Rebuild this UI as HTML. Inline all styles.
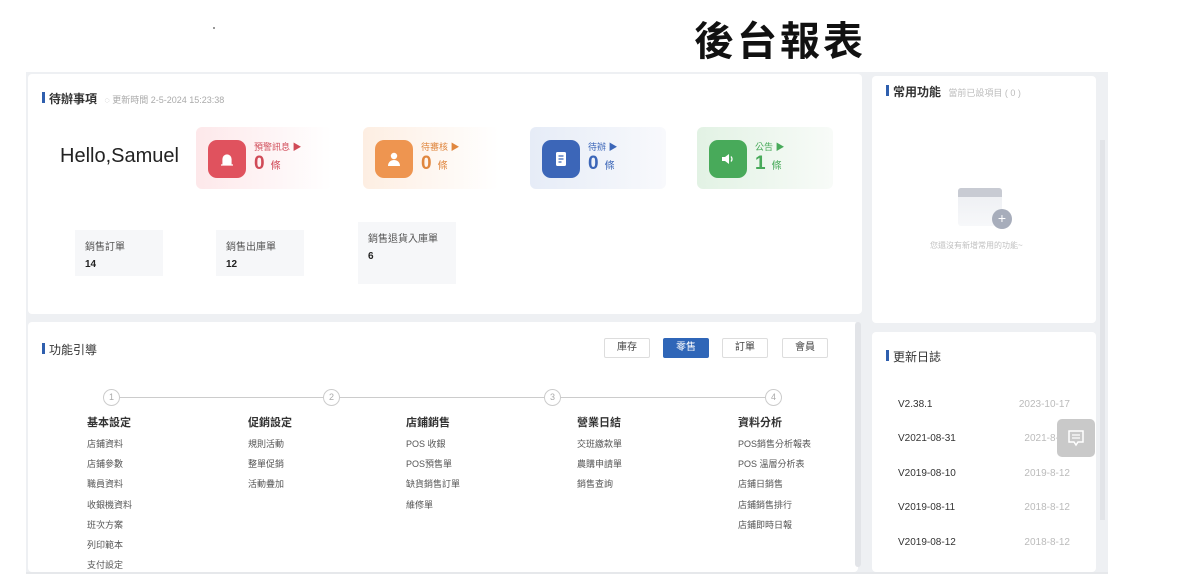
<!DOCTYPE html>
<html><head><meta charset="utf-8"><style>
*{margin:0;padding:0;box-sizing:border-box}
body{width:1200px;height:588px;background:#fff;font-family:"Liberation Sans","Noto Sans CJK TC",sans-serif;position:relative;overflow:hidden;color:#333}
.abs{position:absolute}
.bg{left:26px;top:72px;width:1082px;height:500px;background:#eef0f3}
.panel{position:absolute;background:#fff;border-radius:4px}
.h{position:absolute;font-size:12px;font-weight:bold;color:#333;padding-left:7px}
.h:before{content:"";position:absolute;left:0;top:2px;width:3px;height:11px;background:#2f5fae}
.card{position:absolute;width:136px;height:62px;border-radius:6px;top:127px}
.ic{position:absolute;left:12px;top:13px;width:38px;height:38px;border-radius:9px}
.ic svg{position:absolute;left:11px;top:11px}
.ct{position:absolute;left:58px;top:13px;font-size:9px}
.cn{position:absolute;left:58px;top:26px;font-size:19px;font-weight:bold}
.cn span{font-size:10px;font-weight:normal;margin-left:6px}
.stat{position:absolute;background:#f6f7f9;width:88px;height:46px;top:230px;font-size:10px;color:#555;padding:8px 10px}
.stat b{display:block;color:#222;margin-top:6px;font-size:10px}
.btn{position:absolute;top:338px;height:20px;border:1px solid #ddd;border-radius:2px;font-size:10px;text-align:center;line-height:18px;color:#444;width:46px;background:#fff}
.col{position:absolute;top:416px;font-size:9px;color:#555;line-height:20.2px}
.col b{font-size:11px;color:#333;display:block;line-height:14px;margin-bottom:4px}
.step{position:absolute;top:389px;width:17px;height:17px;border:1.5px solid #ccc;border-radius:50%;font-size:9px;color:#aaa;text-align:center;line-height:14px;background:#fff}
.log{position:absolute;left:898px;font-size:10px;color:#333;width:172px}
.log span{float:right;color:#bbb}
</style></head><body>
<div class="abs" style="left:213px;top:27px;width:2px;height:2px;background:#999"></div>
<div class="abs" style="left:694px;top:9px;font-size:40px;font-weight:bold;color:#111;letter-spacing:3px">後台報表</div>
<div class="abs bg"></div>
<div class="panel" style="left:28px;top:74px;width:834px;height:240px"></div>
<div class="panel" style="left:28px;top:322px;width:830px;height:250px"></div>
<div class="abs" style="left:855px;top:322px;width:6px;height:245px;background:#e2e4e8;border-radius:3px"></div>
<div class="panel" style="left:872px;top:76px;width:224px;height:247px"></div>
<div class="panel" style="left:872px;top:332px;width:224px;height:240px"></div>
<div class="abs" style="left:1100px;top:140px;width:5px;height:380px;background:#e2e4e8"></div>
<div class="abs" style="left:26px;top:572px;width:1082px;height:2px;background:#e6e8eb"></div>

<div class="h" style="left:42px;top:90px">待辦事項 <span style="font-weight:normal;font-size:9px;color:#aaa;margin-left:4px">◌ 更新時間 2-5-2024 15:23:38</span></div>
<div class="abs" style="left:60px;top:145px;font-size:20px;color:#222">Hello,Samuel</div>

<div class="card" style="left:196px;background:linear-gradient(90deg,#fde8ea,#fff)"><div class="ic" style="background:#e0525e"><svg width="16" height="16" viewBox="0 0 16 16"><path d="M4 13V8a4 4 0 0 1 8 0v5z M2 14h12" fill="#fff" stroke="#fff" stroke-width="1.2"/></svg></div><div class="ct" style="color:#d04a57">預警訊息 ▶</div><div class="cn" style="color:#d04a57">0<span>條</span></div></div>
<div class="card" style="left:363px;background:linear-gradient(90deg,#fdeee2,#fff)"><div class="ic" style="background:#ee9550"><svg width="16" height="16" viewBox="0 0 16 16"><circle cx="8" cy="5" r="3.2" fill="#fff"/><path d="M2 15c0-4 3-6 6-6s6 2 6 6z" fill="#fff"/></svg></div><div class="ct" style="color:#e0873f">待審核 ▶</div><div class="cn" style="color:#e0873f">0<span>條</span></div></div>
<div class="card" style="left:530px;background:linear-gradient(90deg,#e6ecf7,#f8f9fc)"><div class="ic" style="background:#3c66b8"><svg width="16" height="16" viewBox="0 0 16 16"><rect x="3" y="1" width="10" height="14" rx="1.5" fill="#fff"/><path d="M5.5 5h5M5.5 8h5M5.5 11h3" stroke="#3c66b8" stroke-width="1.2"/></svg></div><div class="ct" style="color:#3c66b8">待辦 ▶</div><div class="cn" style="color:#3c66b8">0<span>條</span></div></div>
<div class="card" style="left:697px;background:linear-gradient(90deg,#e2f2e4,#f8fbf8)"><div class="ic" style="background:#48aa5a"><svg width="16" height="16" viewBox="0 0 16 16"><path d="M2 6h3l4-3v10l-4-3H2z" fill="#fff"/><path d="M11 5.5q2 2.5 0 5" stroke="#fff" stroke-width="1.3" fill="none"/></svg></div><div class="ct" style="color:#48aa5a">公告 ▶</div><div class="cn" style="color:#48aa5a">1<span>條</span></div></div>

<div class="stat" style="left:75px">銷售訂單<b>14</b></div>
<div class="stat" style="left:216px">銷售出庫單<b>12</b></div>
<div class="stat" style="left:358px;top:222px;width:98px;height:62px">銷售退貨入庫單<b>6</b></div>

<div class="h" style="left:42px;top:341px;font-weight:normal">功能引導</div>
<div class="btn" style="left:604px">庫存</div>
<div class="btn" style="left:663px;background:#2f66b8;color:#fff;border-color:#2f66b8">零售</div>
<div class="btn" style="left:722px">訂單</div>
<div class="btn" style="left:782px">會員</div>
<div class="abs" style="left:112px;top:397px;width:660px;height:1px;background:#ccc"></div>
<div class="step" style="left:103px">1</div><div class="step" style="left:323px">2</div><div class="step" style="left:544px">3</div><div class="step" style="left:765px">4</div>
<div class="col" style="left:87px"><b>基本設定</b>店鋪資料<br>店鋪參數<br>職員資料<br>收銀機資料<br>班次方案<br>列印範本<br>支付設定</div>
<div class="col" style="left:248px"><b>促銷設定</b>規則活動<br>整單促銷<br>活動疊加</div>
<div class="col" style="left:406px"><b>店鋪銷售</b>POS 收銀<br>POS預售單<br>缺貨銷售訂單<br>維修單</div>
<div class="col" style="left:577px"><b>營業日結</b>交班繳款單<br>農購申請單<br>銷售查詢</div>
<div class="col" style="left:738px"><b>資料分析</b>POS銷售分析報表<br>POS 溫層分析表<br>店鋪日銷售<br>店鋪銷售排行<br>店鋪即時日報</div>

<div class="h" style="left:886px;top:83px">常用功能 <span style="font-weight:normal;font-size:9px;color:#bbb;margin-left:4px">當前已設項目 ( 0 )</span></div>
<div class="abs" style="left:958px;top:188px;width:44px;height:38px;background:linear-gradient(#eceef2,#f7f8fa);border-radius:3px"></div>
<div class="abs" style="left:958px;top:188px;width:44px;height:9px;background:#c8cbd3;border-radius:3px 3px 0 0"></div>
<div class="abs" style="left:992px;top:209px;width:20px;height:20px;border-radius:50%;background:#a7adbb;color:#fff;font-size:14px;text-align:center;line-height:19px">+</div>
<div class="abs" style="left:930px;top:240px;font-size:8px;color:#c0c0c0">您還沒有新增常用的功能~</div>

<div class="h" style="left:886px;top:348px;font-weight:normal">更新日誌</div>
<div class="log" style="top:399px">V2.38.1<span>2023-10-17</span></div>
<div class="log" style="top:433px">V2021-08-31<span>2021-8-31</span></div>
<div class="log" style="top:468px">V2019-08-10<span>2019-8-12</span></div>
<div class="log" style="top:502px">V2019-08-11<span>2018-8-12</span></div>
<div class="log" style="top:537px">V2019-08-12<span>2018-8-12</span></div>
<div class="abs" style="left:1057px;top:419px;width:38px;height:38px;border-radius:5px;background:#c9c9c9"><svg width="38" height="38" viewBox="0 0 38 38"><path d="M12 12h14v11h-5l-2 3-2-3h-5z" fill="none" stroke="#fff" stroke-width="1.5"/><path d="M15 16h8M15 19h8" stroke="#fff" stroke-width="1.3"/></svg></div>
</body></html>
